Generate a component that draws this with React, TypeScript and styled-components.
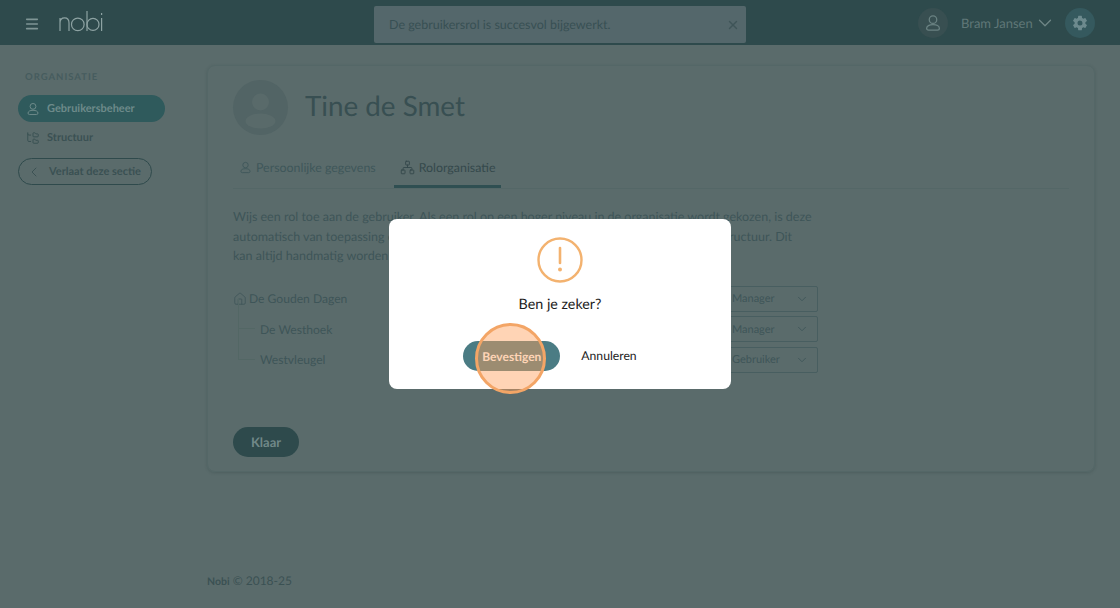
import React from 'react';
import styled, { createGlobalStyle } from 'styled-components';
import { ChevronDown, ChevronLeft, FolderTree, Home, Menu, Network, X } from 'lucide-react';
import { IoSettingsSharp } from 'react-icons/io5';

const GlobalStyle = createGlobalStyle`
  html, body { margin: 0; padding: 0; background: #5a6b6b; }
  body { font-family: "Lato", "Inter", sans-serif; color: #3a5052; text-rendering: geometricPrecision; }
`;

const Page = styled.div`
  width: 1120px;
  height: 608px;
  overflow: hidden;
  position: relative;
  display: flex;
  flex-direction: column;
  background: #5a6b6b;
`;

const Header = styled.header`
  height: 45px;
  flex: none;
  background: #2e4a4c;
  display: flex;
  align-items: center;
  padding: 0 25px 0 24px;
  position: relative;
`;

const MenuButton = styled.div`
  display: flex;
  color: #7f9595;
  margin-top: 2px;
`;

const Logo = styled.svg`
  margin-left: 19px;
  margin-bottom: 3px;
`;

const Toast = styled.div`
  position: absolute;
  left: 374px;
  top: 6px;
  width: 372px;
  height: 37px;
  box-sizing: border-box;
  background: #54676b;
  border-radius: 2px;
  display: flex;
  align-items: center;
  justify-content: space-between;
  padding: 0 6px 0 15px;
  font-size: 12.5px;
  color: #385054;
`;

const UserArea = styled.div`
  margin-left: auto;
  display: flex;
  align-items: center;
`;

const RoundIcon = styled.div<{ $bg: string; $color: string }>`
  width: 30px;
  height: 30px;
  border-radius: 50%;
  background: ${(p) => p.$bg};
  color: ${(p) => p.$color};
  display: flex;
  align-items: center;
  justify-content: center;
`;

const UserName = styled.span`
  margin-left: 13px;
  width: 73px;
  font-size: 13px;
  white-space: nowrap;
  color: #5f7777;
`;

const UserChevron = styled.div`
  display: flex;
  color: #6f8686;
  margin-right: 9px;
`;

const Body = styled.div`
  flex: 1;
  display: flex;
`;

const Sidebar = styled.aside`
  width: 207px;
  flex: none;
  box-sizing: border-box;
  padding: 27px 0 0 18px;
`;

const SectionLabel = styled.div`
  font-size: 9.5px;
  font-weight: 700;
  letter-spacing: 1px;
  color: #465c5e;
  padding-left: 7px;
  height: 23px;
  line-height: 12px;
`;

const NavItem = styled.div<{ $active?: boolean }>`
  width: 147px;
  height: 27px;
  border-radius: 14px;
  background: ${(p) => (p.$active ? '#2f5a5c' : 'transparent')};
  color: ${(p) => (p.$active ? '#6d8a8a' : '#3a5153')};
  display: flex;
  align-items: center;
  gap: 7px;
  padding-left: 8px;
  box-sizing: border-box;
  font-size: 11px;
  font-weight: 700;
  margin-bottom: 2px;
`;

const LeaveButton = styled.div`
  margin-top: 7px;
  width: 134px;
  height: 27px;
  box-sizing: border-box;
  border: 1px solid #2f4a4c;
  border-radius: 14px;
  display: flex;
  align-items: center;
  gap: 7px;
  padding-left: 7px;
  font-size: 11px;
  font-weight: 700;
  white-space: nowrap;
  color: #3a5153;
`;

const Main = styled.main`
  flex: 1;
  display: flex;
  flex-direction: column;
  padding: 20px 25px 20px 0;
`;

const Card = styled.section`
  height: 407px;
  box-sizing: border-box;
  border: 1px solid #546767;
  border-radius: 8px;
  padding: 14px 25px 0;
  box-shadow: 0 1px 3px rgba(40, 60, 60, 0.25);
`;

const Profile = styled.div`
  display: flex;
  align-items: center;
  gap: 17px;
`;

const Avatar = styled.div`
  width: 55px;
  height: 55px;
  border-radius: 50%;
  background: #526465;
  overflow: hidden;
`;

const Name = styled.h1`
  margin: 0 0 4px;
  font-size: 27.8px;
  font-weight: 400;
  color: #384f52;
`;

const Tabs = styled.nav`
  margin-top: 19px;
  height: 34px;
  display: flex;
  border-bottom: 1px solid #546767;
`;

const Tab = styled.div<{ $active?: boolean }>`
  height: 34px;
  box-sizing: border-box;
  display: flex;
  align-items: center;
  gap: 4px;
  padding: 0 6px 4px;
  margin-right: 12px;
  font-size: 12.4px;
  color: ${(p) => (p.$active ? '#35494c' : '#3f575a')};
  border-bottom: ${(p) => (p.$active ? '3px solid #2f4f52' : '3px solid transparent')};
`;

const Intro = styled.p`
  margin: 18px 0 0;
  font-size: 12.5px;
  line-height: 19.5px;
  color: #3e5558;
`;

const Tree = styled.div`
  margin-top: 20px;
  width: 585px;
  display: flex;
  flex-direction: column;
  gap: 4.5px;
`;

const TreeRow = styled.div<{ $child?: boolean }>`
  height: 26px;
  display: flex;
  align-items: center;
  justify-content: space-between;
  position: relative;
  padding-left: ${(p) => (p.$child ? '27px' : '0')};
  ${(p) =>
    p.$child &&
    `&::before {
      content: '';
      position: absolute;
      left: 5px;
      top: -18px;
      bottom: 13px;
      width: 16px;
      border-left: 1px solid #536765;
      border-bottom: 1px solid #536765;
    }`}
`;

const TreeLabel = styled.span`
  display: flex;
  align-items: center;
  gap: 2px;
  font-size: 12.1px;
  color: #3e5558;
`;

const RoleSelect = styled.div`
  width: 100px;
  height: 26px;
  box-sizing: border-box;
  border: 1px solid #485e60;
  border-radius: 2px;
  display: flex;
  align-items: center;
  justify-content: space-between;
  padding: 0 8px 0 13px;
  font-size: 11px;
  color: #3e5558;
`;

const DoneButton = styled.div`
  margin-top: 54px;
  width: 66px;
  height: 30px;
  border-radius: 15px;
  background: #2e4a4c;
  color: #708888;
  display: flex;
  align-items: center;
  justify-content: center;
  font-size: 13px;
  font-weight: 700;
`;

const Footer = styled.footer`
  margin-top: auto;
  font-size: 12px;
  color: #3a5153;

  b {
    font-size: 10.5px;
  }
`;

const Backdrop = styled.div`
  position: absolute;
  inset: 0;
  display: flex;
  align-items: center;
  justify-content: center;
`;

const Dialog = styled.div`
  width: 342px;
  height: 170px;
  box-sizing: border-box;
  background: #fff;
  border-radius: 8px;
  padding-top: 18px;
  display: flex;
  flex-direction: column;
  align-items: center;
  position: relative;
`;

const DialogTitle = styled.div`
  margin-top: 13px;
  font-size: 14.3px;
  color: #1c1c1c;
`;

const DialogActions = styled.div`
  margin-top: 28px;
  display: flex;
  align-items: center;
  gap: 21px;
`;

const ConfirmButton = styled.div`
  width: 97px;
  height: 30px;
  border-radius: 15px;
  background: #4b7c84;
  color: #fff;
  display: flex;
  align-items: center;
  justify-content: center;
  font-size: 12px;
  font-weight: 700;
  position: relative;
`;

const Spotlight = styled.div`
  position: absolute;
  left: 12px;
  top: -18px;
  width: 71px;
  height: 71px;
  box-sizing: border-box;
  border-radius: 50%;
  border: 3.5px solid #f3a566;
  background: rgba(255, 160, 90, 0.45);
`;

const CancelButton = styled.div`
  font-size: 12.2px;
  color: #1c1c1c;
  padding-right: 20px;
  margin-bottom: 1px;
`;

const PersonIcon = ({ size, strokeWidth = 1.7 }: { size: number; strokeWidth?: number }) => (
  <svg width={size} height={size} viewBox="0 0 24 24" fill="none" stroke="currentColor" strokeWidth={strokeWidth}>
    <circle cx="12" cy="7.5" r="5" />
    <path d="M3.5 19c0-3 3.5-4.8 8.5-4.8s8.5 1.8 8.5 4.8c0 1.6-.9 2.5-2.5 2.5H6c-1.6 0-2.5-.9-2.5-2.5z" />
  </svg>
);

const rows = [
  { name: 'De Westhoek', role: 'Manager' },
  { name: 'Westvleugel', role: 'Gebruiker' },
];

export default function App() {
  return (
    <Page>
      <GlobalStyle />
      <Header>
        <MenuButton>
          <Menu size={16} strokeWidth={2.4} />
        </MenuButton>
        <Logo width="44" height="22" viewBox="0 0 44 22" fill="none" stroke="#8ea3a3" strokeWidth="1.2">
          <path d="M1 21V8M1 13c0-3.2 2-5.2 4.6-5.2S10 9.8 10 13v8" />
          <circle cx="18.8" cy="14.4" r="6.3" />
          <path d="M28 1v20" />
          <circle cx="34" cy="14.4" r="6" />
          <path d="M42.6 8v13M42.6 3v2" />
        </Logo>
        <Toast>
          De gebruikersrol is succesvol bijgewerkt.
          <X size={14} strokeWidth={2.4} color="#3f5558" />
        </Toast>
        <UserArea>
          <RoundIcon $bg="#384f51" $color="#6a8282">
            <PersonIcon size={18} />
          </RoundIcon>
          <UserName>Bram Jansen</UserName>
          <UserChevron>
            <ChevronDown size={22} strokeWidth={1.4} />
          </UserChevron>
          <RoundIcon $bg="#35595e" $color="#6d8a8e">
            <IoSettingsSharp size={16} />
          </RoundIcon>
        </UserArea>
      </Header>
      <Body>
        <Sidebar>
          <SectionLabel>ORGANISATIE</SectionLabel>
          <NavItem $active>
            <PersonIcon size={14} />
            Gebruikersbeheer
          </NavItem>
          <NavItem>
            <FolderTree size={14} strokeWidth={1.7} />
            Structuur
          </NavItem>
          <LeaveButton>
            <ChevronLeft size={16} strokeWidth={1.4} />
            Verlaat deze sectie
          </LeaveButton>
        </Sidebar>
        <Main>
          <Card>
            <Profile>
              <Avatar>
                <svg width="55" height="55" viewBox="0 0 55 55" fill="#596a6a">
                  <circle cx="27.5" cy="22" r="8.5" />
                  <ellipse cx="27.5" cy="41" rx="15" ry="7.5" />
                </svg>
              </Avatar>
              <Name>Tine de Smet</Name>
            </Profile>
            <Tabs>
              <Tab>
                <PersonIcon size={13} />
                Persoonlijke gegevens
              </Tab>
              <Tab $active>
                <Network size={15} strokeWidth={1.5} />
                Rolorganisatie
              </Tab>
            </Tabs>
            <Intro>
              Wijs een rol toe aan de gebruiker. Als een rol op een hoger niveau in de organisatie wordt gekozen, is deze
              <br />
              automatisch van toepassing op alle onderliggende niveaus in de organisatie en in de hele structuur. Dit
              <br />
              kan altijd handmatig worden aangepast.
            </Intro>
            <Tree>
              <TreeRow>
                <TreeLabel>
                  <Home size={14} strokeWidth={1.4} />
                  De Gouden Dagen
                </TreeLabel>
                <RoleSelect>
                  Manager
                  <ChevronDown size={14} strokeWidth={1.5} />
                </RoleSelect>
              </TreeRow>
              {rows.map((row) => (
                <TreeRow $child key={row.name}>
                  <TreeLabel>{row.name}</TreeLabel>
                  <RoleSelect>
                    {row.role}
                    <ChevronDown size={14} strokeWidth={1.5} />
                  </RoleSelect>
                </TreeRow>
              ))}
            </Tree>
            <DoneButton>Klaar</DoneButton>
          </Card>
          <Footer>
            <b>Nobi</b> © 2018-25
          </Footer>
        </Main>
      </Body>
      <Backdrop>
        <Dialog>
          <svg width="46" height="46" viewBox="0 0 46 46" fill="none" stroke="#f3b26f">
            <circle cx="23" cy="23" r="21.5" strokeWidth="2.4" />
            <path d="M23 11v15" strokeWidth="2.6" strokeLinecap="round" />
            <circle cx="23" cy="32.5" r="2" fill="#f3b26f" stroke="none" />
          </svg>
          <DialogTitle>Ben je zeker?</DialogTitle>
          <DialogActions>
            <ConfirmButton>
              Bevestigen
              <Spotlight />
            </ConfirmButton>
            <CancelButton>Annuleren</CancelButton>
          </DialogActions>
        </Dialog>
      </Backdrop>
    </Page>
  );
}
